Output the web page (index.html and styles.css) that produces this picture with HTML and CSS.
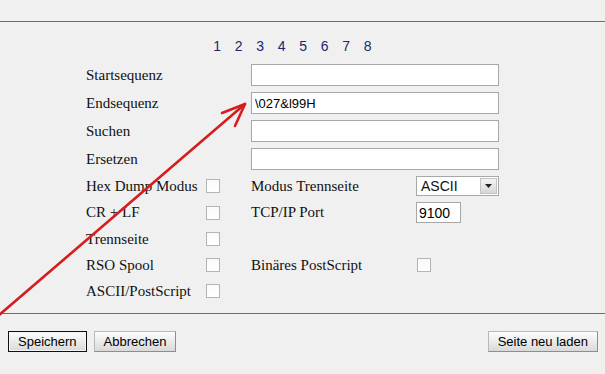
FILE: index.html
```
<!DOCTYPE html>
<html lang="de">
<head>
  <meta charset="UTF-8">
  <title>Druckereinstellungen</title>
  <link rel="stylesheet" href="styles.css">
</head>
<body>
  <div class="top-bar"></div>

  <div class="content">
    <div class="pages">
      <span>1</span><span>2</span><span>3</span><span>4</span>
      <span>5</span><span>6</span><span>7</span><span>8</span>
    </div>

    <form class="settings">
      <label class="lbl wide">Startsequenz</label>
      <input class="txt full" type="text" value="">

      <label class="lbl wide">Endsequenz</label>
      <input class="txt full" type="text" value="\027&amp;l99H">

      <label class="lbl wide">Suchen</label>
      <input class="txt full" type="text" value="">

      <label class="lbl wide">Ersetzen</label>
      <input class="txt full" type="text" value="">

      <!-- Option rows -->
      <label class="lbl">Hex Dump Modus</label>
      <span class="chk"></span>
      <label class="lbl">Modus Trennseite</label>
      <div class="select">
        <span>ASCII</span>
        <span class="select-btn">
          <svg width="7" height="4" viewBox="0 0 7 4"><path d="M0 0h7L3.5 4z" fill="#222"/></svg>
        </span>
      </div>

      <label class="lbl">CR + LF</label>
      <span class="chk"></span>
      <label class="lbl">TCP/IP Port</label>
      <input class="txt port" type="text" value="9100">

      <label class="lbl">Trennseite</label>
      <span class="chk"></span>
      <span></span>
      <span></span>

      <label class="lbl">RSO Spool</label>
      <span class="chk"></span>
      <label class="lbl">Binäres PostScript</label>
      <span class="chk chk-right"></span>

      <label class="lbl">ASCII/PostScript</label>
      <span class="chk"></span>
    </form>
  </div>

  <div class="footer">
    <div class="btn-group">
      <button class="btn btn-default" type="button">Speichern</button>
      <button class="btn" type="button">Abbrechen</button>
    </div>
    <button class="btn" type="button">Seite neu laden</button>
  </div>

  <!-- Red annotation arrow drawn over the form -->
  <svg class="arrow" width="605" height="374" viewBox="0 0 605 374">
    <g stroke="#d61d1d" stroke-width="2.6" stroke-linecap="round" fill="none">
      <path d="M-2 316L245 104"/>
      <path d="M245 104L222 113M245 104L235 126"/>
    </g>
  </svg>
</body>
</html>
```

FILE: styles.css
```
/**
 * Base.
 */
* {
  box-sizing: border-box;
}
body {
  position: relative;
  margin: 0;
  height: 374px;
  overflow: hidden;
  background-color: #f0f0f0;
  font-family: 'Liberation Serif', 'Times New Roman', serif;
  font-size: 15px;
  color: #111;
}

.top-bar {
  height: 22px;
  border-bottom: 1px solid #6e6e6e;
}

/**
 * Main content.
 */
.content {
  width: 413px;
  margin-left: 86px;
}
.pages {
  display: flex;
  justify-content: center;
  gap: 13.5px;
  padding-top: 16px;
  margin-bottom: 9px;
  line-height: 17px;
  font-family: 'Liberation Sans', Arial, sans-serif;
  font-size: 14px;
  color: #24246e;
}
.pages span {
  width: 8px;
  text-align: center;
}

.settings {
  display: grid;
  grid-template-columns: 120px 45px 164px 84px;
  grid-template-rows: 22px 22px 22px 22px 20px 21px 20px 20px 20px;
  row-gap: 6px;
  margin: 0;
}
.lbl {
  display: flex;
  align-items: center;
  white-space: nowrap;
  font-family: 'Liberation Serif', 'Times New Roman', serif;
}
.lbl.wide {
  grid-column: 1 / 3;
}

.txt {
  height: 100%;
  margin: 0;
  padding: 0 3px;
  border: 1px solid #a7a7a7;
  background: #fff;
  font-family: 'Liberation Sans', Arial, sans-serif;
  font-size: 13px;
  color: #000;
  outline: none;
}
.txt.full {
  grid-column: 3 / 5;
}
.txt.port {
  width: 45px;
  margin-left: 1px;
  padding: 0 2px;
  font-size: 14px;
}

.chk {
  align-self: center;
  width: 14px;
  height: 14px;
  border: 1px solid #b4b4b4;
  background: linear-gradient(#fafafa, #ffffff);
}
.chk-right {
  margin-left: 2px;
}

.select {
  display: flex;
  align-items: center;
  justify-content: space-between;
  margin-left: 1px;
  padding: 0 1px 0 4px;
  border: 1px solid #a7a7a7;
  background: #fff;
  font-family: 'Liberation Sans', Arial, sans-serif;
  font-size: 14px;
}
.select-btn {
  display: flex;
  align-items: center;
  justify-content: center;
  width: 17px;
  height: 16px;
  border: 1px solid #c2c2c2;
  background: linear-gradient(#f4f4f4, #d6d6d6);
}

/**
 * Footer buttons.
 */
.footer {
  display: flex;
  justify-content: space-between;
  margin-top: 12px;
  padding: 17px 7px 0 8px;
  border-top: 1px solid #6e6e6e;
}
.btn-group {
  display: flex;
  gap: 7px;
}
.btn {
  height: 21px;
  padding: 0 9px;
  border: 1px solid #b8b8b8;
  border-right-color: #8e8e8e;
  border-bottom-color: #8e8e8e;
  background: linear-gradient(#fdfdfd, #d9d9d9);
  font-family: 'Liberation Sans', Arial, sans-serif;
  font-size: 13px;
  color: #000;
}
.btn-default {
  border-color: #111;
  box-shadow: inset 0 0 0 1px #f4f4f4;
}

.arrow {
  position: absolute;
  top: 0;
  left: 0;
  pointer-events: none;
}
```
